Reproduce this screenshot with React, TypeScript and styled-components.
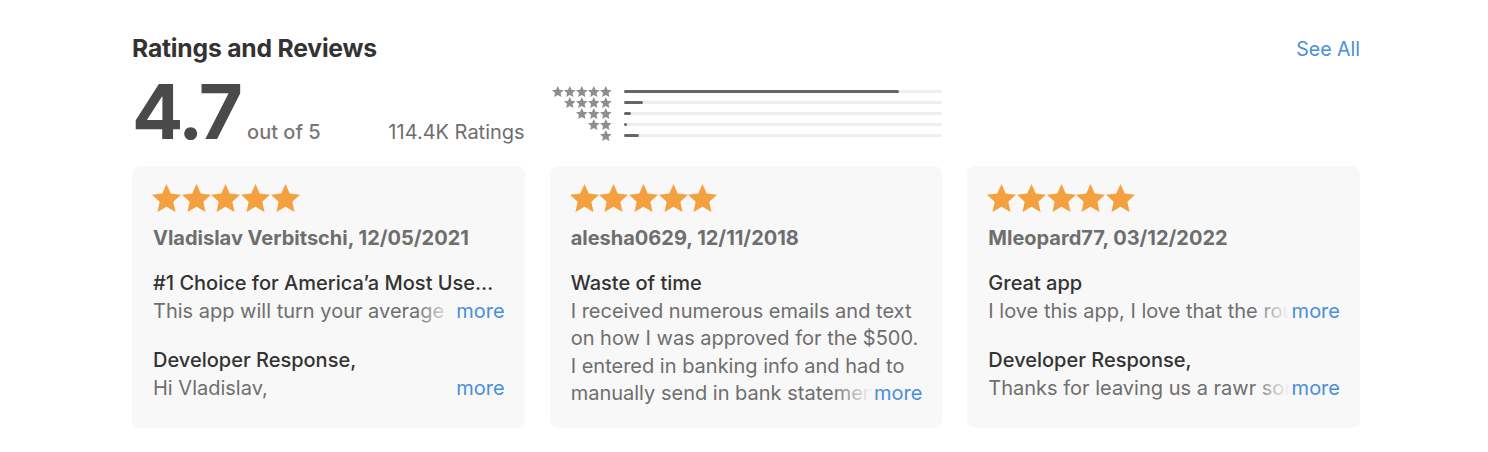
import React from "react";
import styled, { createGlobalStyle } from "styled-components";

const GlobalStyle = createGlobalStyle`
  body {
    margin: 0;
    background: #ffffff;
    font-family: Inter, "Liberation Sans", Arial, sans-serif;
    -webkit-font-smoothing: antialiased;
  }
`;

const Page = styled.div`
  width: 1228px;
  padding: 34px 0 0 132px;
`;

const Header = styled.div`
  display: flex;
  justify-content: space-between;
  align-items: center;
  height: 28px;
`;

const Title = styled.h2`
  margin: 0;
  font-size: 24.7px;
  font-weight: 700;
  color: #333333;
  letter-spacing: -0.2px;
`;

const SeeAll = styled.a`
  font-size: 19.5px;
  color: #4a8edb;
  text-decoration: none;
  margin-top: 2px;
`;

const Grid = styled.div`
  display: grid;
  grid-template-columns: repeat(3, minmax(0, 1fr));
  column-gap: 25px;
`;

const Summary = styled(Grid)`
  margin-top: 10px;
  height: 78px;
  align-items: end;
`;

const ScoreCell = styled.div`
  display: flex;
  align-items: baseline;
`;

const Score = styled.span`
  font-size: 76px;
  line-height: 78px;
  font-weight: 700;
  color: #4a4a4a;
  letter-spacing: -2.8px;
`;

const OutOf = styled.span`
  margin-left: 7px;
  font-size: 20px;
  font-weight: 500;
  color: #777777;
`;

const Count = styled.span`
  margin-left: auto;
  font-size: 20px;
  color: #6e6e6e;
`;

const Histogram = styled.div`
  display: flex;
  flex-direction: column;
  margin-bottom: 9px;
`;

const HistRow = styled.div`
  display: grid;
  grid-template-columns: 62px 1fr;
  column-gap: 12px;
  align-items: center;
  height: 11px;
`;

const MiniStars = styled.div`
  display: flex;
  justify-content: flex-end;
  gap: 0.4px;
`;

const Track = styled.div`
  height: 3px;
  background: #eeeeee;
  border-radius: 2px;
`;

const Fill = styled.div`
  height: 3px;
  background: #666666;
  border-radius: 2px;
`;

const Cards = styled(Grid)`
  margin-top: 16px;
`;

const Card = styled.div`
  background: #f8f8f8;
  border-radius: 8px;
  height: 262px;
  box-sizing: border-box;
  padding: 17px 20px 0 21px;
`;

const StarRow = styled.div`
  display: flex;
  align-items: center;
  gap: 0.7px;
  height: 29px;
  margin-left: -1px;
`;

const Author = styled.div`
  margin-top: 12px;
  font-size: 20px;
  line-height: 28px;
  font-weight: 650;
  color: #6e6e6e;
`;

const Heading = styled.div<{ $gap: number }>`
  margin-top: ${(p) => p.$gap}px;
  font-size: 20px;
  line-height: 27.6px;
  font-weight: 500;
  color: #333333;
  white-space: nowrap;
  overflow: hidden;
  text-overflow: ellipsis;
`;

const Body = styled.div<{ $lines: number }>`
  position: relative;
  font-size: 20px;
  line-height: 27.6px;
  color: #6e6e6e;
  height: ${(p) => p.$lines * 27.6}px;
  overflow: hidden;
`;

const More = styled.span`
  position: absolute;
  right: 0;
  bottom: 0;
  padding-left: 40px;
  color: #4a8edb;
  background: linear-gradient(to right, rgba(248, 248, 248, 0), #f8f8f8 38px);
`;

const Star = ({ w, h, color }: { w: number; h: number; color: string }) => (
  <svg width={w} height={h} viewBox="1.4 1.6 21.2 20.2" preserveAspectRatio="none">
    <path
      fill={color}
      d="M12 1.6l3.1 6.9 7.5.8-5.6 5.1 1.6 7.4L12 18l-6.6 3.8 1.6-7.4-5.6-5.1 7.5-.8z"
    />
  </svg>
);

const histogram = [86.5, 6, 2.2, 1, 4.7];

type Review = {
  author: string;
  title: string;
  body: string;
  lines: number;
  response?: string;
};

const reviews: Review[] = [
  {
    author: "Vladislav Verbitschi, 12/05/2021",
    title: "#1 Choice for America’a Most Used Cash Advance App",
    body: "This app will turn your average smartphone into a personal finance tool that helps you budget",
    lines: 1,
    response: "Hi Vladislav,",
  },
  {
    author: "alesha0629, 12/11/2018",
    title: "Waste of time",
    body: "I received numerous emails and text on how I was approved for the $500. I entered in banking info and had to manually send in bank statements and then they told me",
    lines: 4,
  },
  {
    author: "Mleopard77, 03/12/2022",
    title: "Great app",
    body: "I love this app, I love that the round up feature helps me save money",
    lines: 1,
    response: "Thanks for leaving us a rawr some review!",
  },
];

export default function App() {
  return (
    <Page>
      <GlobalStyle />
      <Header>
        <Title>Ratings and Reviews</Title>
        <SeeAll href="#">See All</SeeAll>
      </Header>
      <Summary>
        <ScoreCell>
          <Score>4.7</Score>
          <OutOf>out of 5</OutOf>
          <Count>114.4K Ratings</Count>
        </ScoreCell>
        <Histogram>
          {histogram.map((pct, i) => (
            <HistRow key={i}>
              <MiniStars>
                {Array.from({ length: 5 - i }).map((_, j) => (
                  <Star key={j} w={11.6} h={11} color="#8e8e8e" />
                ))}
              </MiniStars>
              <Track>
                <Fill style={{ width: `${pct}%` }} />
              </Track>
            </HistRow>
          ))}
        </Histogram>
      </Summary>
      <Cards>
        {reviews.map((r) => (
          <Card key={r.author}>
            <StarRow>
              {Array.from({ length: 5 }).map((_, j) => (
                <Star key={j} w={29} h={28} color="#f4a03e" />
              ))}
            </StarRow>
            <Author>{r.author}</Author>
            <Heading $gap={18}>{r.title}</Heading>
            <Body $lines={r.lines}>
              {r.body}
              <More>more</More>
            </Body>
            {r.response && (
              <>
                <Heading $gap={22}>Developer Response,</Heading>
                <Body $lines={1}>
                  {r.response}
                  <More>more</More>
                </Body>
              </>
            )}
          </Card>
        ))}
      </Cards>
    </Page>
  );
}
